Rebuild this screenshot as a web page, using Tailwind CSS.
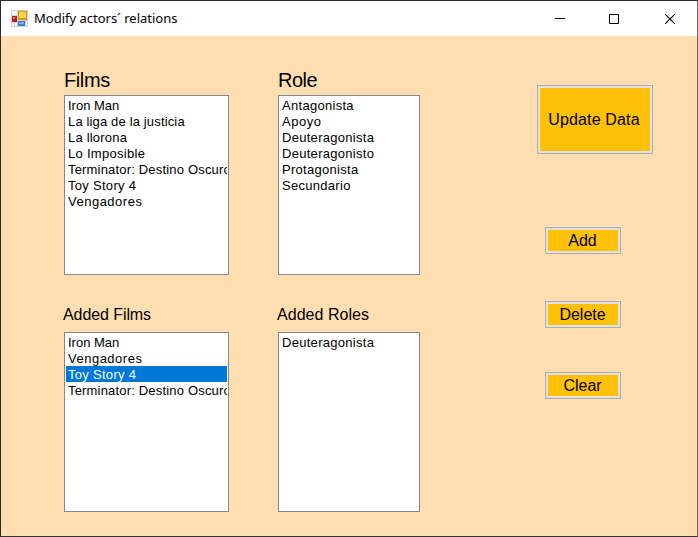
<!DOCTYPE html>
<html lang="en">
<head>
<meta charset="utf-8">
<title>Modify actors´ relations</title>
<script src="https://cdn.jsdelivr.net/npm/@tailwindcss/browser@4"></script>
</head>
<body class="w-[698px] h-[537px] overflow-hidden">
<div class="flex flex-col w-[698px] h-[537px] border border-t-[#2d2b2d] border-l-[#2b2829] border-r-[#6b6560] border-b-[#3b3330] bg-[#ffdfb2] font-['Liberation_Sans',Arial,sans-serif] text-black">
  <header class="flex items-center h-[35px] shrink-0 bg-white pl-[10px]">
    <svg class="w-[17px] h-[17px] shrink-0" viewBox="0 0 17 17" shape-rendering="crispEdges">
      <rect width="17" height="17" fill="#cfcfcf"/>
      <rect x="1" y="1" width="5" height="4" fill="#fafafa"/>
      <rect x="1" y="6" width="5" height="6" fill="#b3261f"/>
      <rect x="2" y="7" width="2" height="2" fill="#dc776b"/>
      <rect x="1" y="13" width="2" height="3" fill="#f8f8f8"/>
      <rect x="4" y="13" width="2" height="3" fill="#f8f8f8"/>
      <rect x="7" y="1" width="9" height="9" fill="#d49a16"/>
      <rect x="8" y="2" width="7" height="6" fill="#f8d452"/>
      <rect x="7" y="11" width="7" height="5" fill="#3f79dc"/>
      <rect x="8" y="12" width="5" height="2" fill="#85b0f6"/>
      <rect x="15" y="11" width="1" height="5" fill="#f8f8f8"/>
    </svg>
    <h1 class="ml-[6px] mb-[2px] flex-1 text-[13px] leading-[16px] whitespace-nowrap font-['Noto_Sans','Open_Sans',sans-serif]"><span>Modify actors´ relations</span></h1>
    <div class="flex items-center mr-[22px]">
      <svg class="mr-[44px] w-[10px] h-[10px]" viewBox="0 0 10 10"><path d="M0 4.5H10" stroke="#000"/></svg>
      <svg class="mr-[46px] w-[10px] h-[10px]" viewBox="0 0 10 10"><path d="M.5 .5H9.500V9.500H.5Z" fill="none" stroke="#000"/></svg>
      <svg class="w-[10px] h-[10px]" viewBox="0 0 10 10"><path d="M0 0L10 10M10 0L0 10" stroke="#000" stroke-width="1.100"/></svg>
    </div>
  </header>
  <main class="flex pl-[62px] pt-[31px]">
    <section class="w-[166px] shrink-0">
      <h2 class="h-[28px] pl-px text-[20px] leading-[26px] tracking-[-0.4px]"><span>Films</span></h2>
      <ul class="ml-px h-[180px] border border-[#828790] bg-white p-px text-[13px] leading-[16px] tracking-[0.29px] whitespace-nowrap overflow-hidden *:pl-[2px] *:pt-px *:h-[16px] *:overflow-hidden">
        <li class="tracking-normal"><span>Iron Man</span></li>
        <li class="tracking-[0.15px]"><span>La liga de la justicia</span></li>
        <li class="tracking-[0.2px]"><span>La llorona</span></li>
        <li><span>Lo Imposible</span></li>
        <li class="tracking-[0.18px]"><span>Terminator: Destino Oscuro</span></li>
        <li><span>Toy Story 4</span></li>
        <li class="tracking-[0.5px]"><span>Vengadores</span></li>
      </ul>
      <h2 class="h-[57px] pt-[30px] text-[16px] leading-[20px] tracking-[-0.08px]"><span>Added Films</span></h2>
      <ul class="ml-px h-[180px] border border-[#828790] bg-white p-px text-[13px] leading-[16px] tracking-[0.29px] whitespace-nowrap overflow-hidden *:pl-[2px] *:pt-px *:h-[16px] *:overflow-hidden">
        <li class="tracking-normal"><span>Iron Man</span></li>
        <li class="tracking-[0.5px]"><span>Vengadores</span></li>
        <li class="bg-[#0078d7] text-white"><span>Toy Story 4</span></li>
        <li class="tracking-[0.18px]"><span>Terminator: Destino Oscuro</span></li>
      </ul>
    </section>
    <section class="ml-[48px] w-[143px] shrink-0">
      <h2 class="h-[28px] pl-px text-[20px] leading-[26px] tracking-[-0.5px]"><span>Role</span></h2>
      <ul class="ml-px h-[180px] border border-[#828790] bg-white p-px text-[13px] leading-[16px] tracking-[0.29px] whitespace-nowrap overflow-hidden *:pl-[2px] *:pt-px *:h-[16px]">
        <li><span>Antagonista</span></li>
        <li class="tracking-[0.5px]"><span>Apoyo</span></li>
        <li><span>Deuteragonista</span></li>
        <li><span>Deuteragonisto</span></li>
        <li><span>Protagonista</span></li>
        <li><span>Secundario</span></li>
      </ul>
      <h2 class="h-[57px] pt-[30px] text-[16px] leading-[20px] tracking-[0.04px]"><span>Added Roles</span></h2>
      <ul class="ml-px h-[180px] border border-[#828790] bg-white p-px text-[13px] leading-[16px] tracking-[0.29px] whitespace-nowrap overflow-hidden *:pl-[2px] *:pt-px *:h-[16px]">
        <li><span>Deuteragonista</span></li>
      </ul>
    </section>
    <section class="ml-[117px] pt-[18px] flex flex-col items-start text-[16px]">
      <button class="w-[116px] h-[69px] border border-[#adadad] bg-[#e1e1e1] p-[2px]"><span class="flex size-full items-center justify-center bg-[#ffc107] pr-[2px] tracking-[0.15px] whitespace-nowrap">Update Data</span></button>
      <button class="ml-[8px] mt-[73px] w-[76px] h-[27px] border border-[#adadad] bg-[#e1e1e1] p-[2px]"><span class="flex size-full items-center justify-center bg-[#ffc107] pr-px">Add</span></button>
      <button class="ml-[8px] mt-[47px] w-[76px] h-[27px] border border-[#adadad] bg-[#e1e1e1] p-[2px]"><span class="flex size-full items-center justify-center bg-[#ffc107] pr-px">Delete</span></button>
      <button class="ml-[8px] mt-[44px] w-[76px] h-[27px] border border-[#adadad] bg-[#e1e1e1] p-[2px]"><span class="flex size-full items-center justify-center bg-[#ffc107] pr-px">Clear</span></button>
    </section>
  </main>
</div>
</body>
</html>
